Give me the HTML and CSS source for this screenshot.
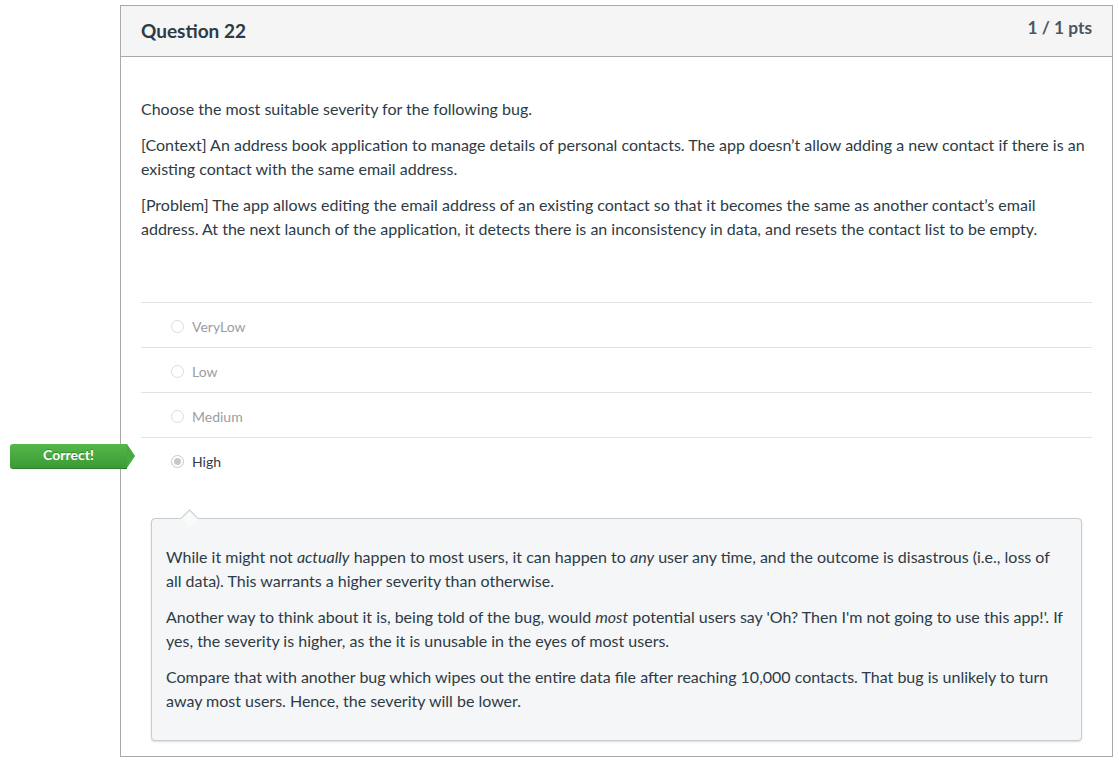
FILE: index.html
```html
<!DOCTYPE html>
<html>
<head>
<meta charset="utf-8">
<link rel="stylesheet" href="styles.css">
</head>
<body>
<div class="question">
  <div class="q-header">
    <span class="q-title">Question 22</span>
    <span class="q-pts">1 / 1 pts</span>
  </div>
  <div class="q-body">
    <div class="q-text">
      <p>Choose the most suitable severity for the following bug.</p>
      <p>[Context] An address book application to manage details of personal contacts. The app doesn’t allow adding a new contact if there is an existing contact with the same email address.</p>
      <p>[Problem] The app allows editing the email address of an existing contact so that it becomes the same as another contact’s email address. At the next launch of the application, it detects there is an inconsistency in data, and resets the contact list to be empty.</p>
    </div>
    <div class="answers">
      <div class="answer"><span class="radio"></span><span class="label">VeryLow</span></div>
      <div class="answer"><span class="radio"></span><span class="label">Low</span></div>
      <div class="answer"><span class="radio"></span><span class="label">Medium</span></div>
      <div class="answer selected">
        <span class="badge">Correct!</span>
        <span class="radio"><span class="dot"></span></span><span class="label">High</span>
      </div>
    </div>
    <div class="feedback">
      <p>While it might not <em>actually</em> happen to most users, it can happen to <em>any</em> user any time, and the outcome is disastrous (i.e., loss of all data). This warrants a higher severity than otherwise.</p>
      <p>Another way to think about it is, being told of the bug, would <em>most</em> potential users say 'Oh? Then I'm not going to use this app!'. If yes, the severity is higher, as the it is unusable in the eyes of most users.</p>
      <p>Compare that with another bug which wipes out the entire data file after reaching 10,000 contacts. That bug is unlikely to turn away most users. Hence, the severity will be lower.</p>
    </div>
  </div>
</div>
</body>
</html>
```
FILE: styles.css
```css
html, body {
  margin: 0;
  padding: 0;
  background: #fff;
}
body {
  font-family: Lato, "Open Sans", sans-serif;
  color: #2d3b45;
  font-size: 14px;
}
.question {
  margin: 5px 0 0 120px;
  width: 991px;
  border: 1px solid #aaa;
}
.q-header {
  display: flex;
  justify-content: space-between;
  align-items: center;
  height: 50px;
  padding: 0 20px;
  background: #f5f5f5;
  border-bottom: 1px solid #aaa;
}
.q-title {
  font-size: 19px;
  font-weight: bold;
  margin-top: -2px;
}
.q-pts {
  font-size: 17.3px;
  font-weight: bold;
  color: #4a5660;
  margin-top: -7px;
}
.q-body {
  padding: 28px 20px 15px;
}
.q-text {
  line-height: 24px;
  font-size: 16px;
}
.q-text p {
  margin: 12px 0;
}
.answers {
  margin-top: 61px;
}
.answer {
  position: relative;
  display: flex;
  align-items: center;
  height: 44px;
  border-top: 1px solid #e2e2e2;
  padding-left: 30px;
}
.radio {
  width: 11px;
  height: 11px;
  border: 1px solid #dcdcdc;
  border-radius: 50%;
  margin-right: 8px;
  display: flex;
  align-items: center;
  justify-content: center;
  background: #fff;
  margin-top: 2px;
}
.selected .radio {
  border-color: #c8c8c8;
}
.dot {
  width: 7px;
  height: 7px;
  border-radius: 50%;
  background: #c8c8c8;
}
.label {
  color: #9a9ea1;
  font-size: 14px;
  margin-top: 3px;
}
.selected .label {
  color: #2d3b45;
}
.badge {
  position: absolute;
  left: -131px;
  top: 6px;
  width: 117px;
  height: 25px;
  box-sizing: border-box;
  background: linear-gradient(#54b848, #3c9a36);
  border-bottom: 1px solid #2e7d2a;
  border-radius: 3px 0 0 3px;
  color: #fff;
  font-weight: bold;
  font-size: 14px;
  line-height: 22px;
  text-align: center;
  text-shadow: 0 -1px 0 rgba(0,0,0,0.25);
}
.badge::after {
  content: "";
  position: absolute;
  right: -8px;
  top: 0;
  border-top: 12px solid transparent;
  border-bottom: 12px solid transparent;
  border-left: 8px solid #47a93f;
}
.feedback {
  position: relative;
  margin: 36px 10px 0 10px;
  padding: 14px 15px 15px 14px;
  background: #f5f6f7;
  border: 1px solid #c7cdd1;
  border-radius: 4px;
  box-shadow: 0 1px 2px rgba(0,0,0,0.15);
  line-height: 24px;
  font-size: 16px;
}
.feedback::before {
  content: "";
  position: absolute;
  left: 31px;
  width: 12px;
  height: 12px;
  background: #f9fafa;
  border-top: 1px solid #c7cdd1;
  border-left: 1px solid #c7cdd1;
  transform: rotate(45deg);
  top: -7px;
}
.feedback p {
  margin: 12px 0;
}
```
